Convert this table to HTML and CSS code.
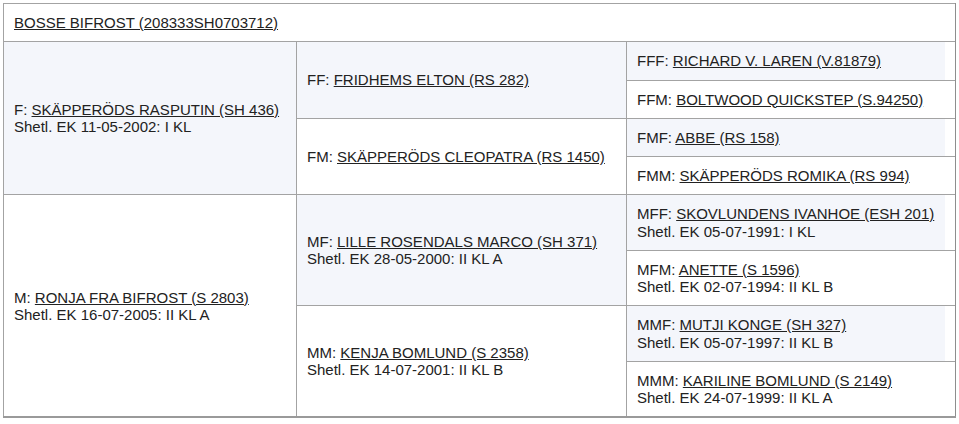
FILE: index.html
```html
<!DOCTYPE html>
<html>
<head>
<meta charset="utf-8">
<link rel="stylesheet" href="styles.css">
</head>
<body>
<table class="ped">
  <colgroup>
    <col class="col1">
    <col class="col2">
    <col class="col3">
  </colgroup>
  <tr>
    <td class="head" colspan="3"><a href="#">BOSSE BIFROST (208333SH0703712)</a></td>
  </tr>
  <tr>
    <td class="g1 alt" rowspan="4">F: <a href="#">SKÄPPERÖDS RASPUTIN (SH 436)</a><br>Shetl. EK 11-05-2002: I KL</td>
    <td class="g2 alt" rowspan="2">FF: <a href="#">FRIDHEMS ELTON (RS 282)</a></td>
    <td class="g3"><div class="in alt">FFF: <a href="#">RICHARD V. LAREN (V.81879)</a></div></td>
  </tr>
  <tr>
    <td class="g3"><div class="in">FFM: <a href="#">BOLTWOOD QUICKSTEP (S.94250)</a></div></td>
  </tr>
  <tr>
    <td class="g2" rowspan="2">FM: <a href="#">SKÄPPERÖDS CLEOPATRA (RS 1450)</a></td>
    <td class="g3"><div class="in alt">FMF: <a href="#">ABBE (RS 158)</a></div></td>
  </tr>
  <tr>
    <td class="g3"><div class="in">FMM: <a href="#">SKÄPPERÖDS ROMIKA (RS 994)</a></div></td>
  </tr>
  <tr>
    <td class="g1" rowspan="4">M: <a href="#">RONJA FRA BIFROST (S 2803)</a><br>Shetl. EK 16-07-2005: II KL A</td>
    <td class="g2 alt" rowspan="2">MF: <a href="#">LILLE ROSENDALS MARCO (SH 371)</a><br>Shetl. EK 28-05-2000: II KL A</td>
    <td class="g3"><div class="in alt">MFF: <a href="#">SKOVLUNDENS IVANHOE (ESH 201)</a><br>Shetl. EK 05-07-1991: I KL</div></td>
  </tr>
  <tr>
    <td class="g3"><div class="in">MFM: <a href="#">ANETTE (S 1596)</a><br>Shetl. EK 02-07-1994: II KL B</div></td>
  </tr>
  <tr>
    <td class="g2" rowspan="2">MM: <a href="#">KENJA BOMLUND (S 2358)</a><br>Shetl. EK 14-07-2001: II KL B</td>
    <td class="g3"><div class="in alt">MMF: <a href="#">MUTJI KONGE (SH 327)</a><br>Shetl. EK 05-07-1997: II KL B</div></td>
  </tr>
  <tr>
    <td class="g3"><div class="in">MMM: <a href="#">KARILINE BOMLUND (S 2149)</a><br>Shetl. EK 24-07-1999: II KL A</div></td>
  </tr>
</table>
</body>
</html>
```
FILE: styles.css
```css
html, body {
  background: #ffffff;
}
body {
  margin: 3px;
  font-family: "Liberation Sans", Arial, sans-serif;
  font-size: 15px;
  line-height: 17.25px;
  color: #222222;
}
.ped {
  width: 952px;
  border-collapse: collapse;
  table-layout: fixed;
  border-top: 1px solid #a3a3a3;
  border-left: 1px solid #a3a3a3;
  border-right: 2px solid #8e8e8e;
  border-bottom: 2px solid #9a9a9a;
}
.col1 { width: 293px; }
.col2 { width: 330px; }
.col3 { width: 329px; }
.ped td {
  border: 1px solid #a3a3a3;
  padding: 10px 10px;
  vertical-align: middle;
  background: #ffffff;
  white-space: nowrap;
}
.ped td.g3 {
  padding: 0 10px 0 0;
}
.in {
  padding: 10px 10px;
}
.ped td.alt, .in.alt {
  background: #f4f6fb;
}
.ped a {
  color: #222222;
  text-decoration: underline;
}
```
